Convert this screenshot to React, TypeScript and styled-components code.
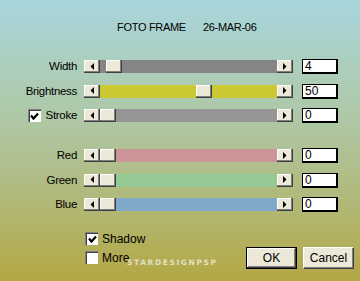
import React, { FC } from "react";
import styled, { createGlobalStyle } from "styled-components";

const GlobalStyle = createGlobalStyle`
  html, body {
    margin: 0;
    padding: 0;
  }
  body {
    font-family: "Liberation Sans", Arial, sans-serif;
    font-size: 11px;
    color: #000;
  }
`;

const Dialog = styled.div`
  position: relative;
  width: 360px;
  height: 281px;
  overflow: hidden;
  background: linear-gradient(
    to bottom,
    #a8d5de 0%,
    #acceba 25%,
    #afc59e 48%,
    #b1b878 72%,
    #b3a744 100%
  );
  display: flex;
  flex-direction: column;
`;

const Title = styled.div`
  display: flex;
  gap: 17px;
  padding-left: 117px;
  margin-top: 21px;
  line-height: 13px;
  font-size: 11px;
  letter-spacing: -0.3px;
`;

const Group = styled.div<{ $top: number }>`
  display: flex;
  flex-direction: column;
  gap: 9.5px;
  margin-top: ${({ $top }) => $top}px;
`;

const Row = styled.div`
  display: flex;
  align-items: center;
  height: 15px;
`;

const Label = styled.div`
  width: 77px;
  display: flex;
  justify-content: flex-end;
  align-items: center;
  gap: 5px;
  white-space: nowrap;
  line-height: 13px;
  font-size: 11.5px;
  letter-spacing: -0.3px;
`;

const ScrollBar = styled.div`
  display: flex;
  width: 209px;
  height: 13px;
  margin-left: 7px;
`;

const Raised = styled.div`
  box-sizing: border-box;
  background: #ece9d8;
  box-shadow: inset -1px -1px #808080, inset 1px 1px #ffffff;
  border-right: 1px solid #404040;
  border-bottom: 1px solid #404040;
`;

const ArrowButton = styled(Raised)`
  width: 16px;
  height: 13px;
  display: flex;
  align-items: center;
  justify-content: center;
`;

const Track = styled.div<{ $color: string }>`
  position: relative;
  flex: 1;
  background: ${({ $color }) => $color};
`;

const Thumb = styled(Raised)`
  position: absolute;
  top: 0;
  width: 16px;
  height: 13px;
`;

const ValueBox = styled.div`
  box-sizing: border-box;
  width: 36px;
  height: 15px;
  margin-left: 9px;
  background: #fff;
  border: 1px solid #000;
  border-right-width: 2px;
  border-bottom-width: 2px;
  padding-left: 2px;
  line-height: 12px;
  font-size: 12px;
`;

const CheckBox = styled.div`
  box-sizing: border-box;
  width: 13px;
  height: 13px;
  background: #fff;
  border-top: 1px solid #808080;
  border-left: 1px solid #808080;
  box-shadow: inset 1px 1px #404040;
  display: flex;
  align-items: center;
  justify-content: center;
  flex-shrink: 0;
`;

const Bottom = styled.div`
  display: flex;
  margin-top: 20px;
`;

const Options = styled.div`
  display: flex;
  flex-direction: column;
  gap: 6px;
  padding-left: 85px;
  width: 246px;
  box-sizing: border-box;
`;

const Option = styled.div`
  display: flex;
  align-items: center;
  gap: 4px;
  height: 13px;
  font-size: 12px;
`;

const Buttons = styled.div`
  display: flex;
  gap: 6px;
  margin-top: 15px;
`;

const Button = styled.div<{ $default?: boolean }>`
  box-sizing: border-box;
  width: 51px;
  height: 22px;
  display: flex;
  align-items: center;
  justify-content: center;
  background: #ece9d8;
  font-size: 12px;
  border: 1px solid ${({ $default }) => ($default ? "#000" : "#fff")};
  ${({ $default }) =>
    $default
      ? "box-shadow: inset -1px -1px #404040, inset 1px 1px #fff, inset -2px -2px #808080;"
      : "border-right-color: #404040; border-bottom-color: #404040; box-shadow: inset -1px -1px #808080;"}
`;

const Watermark = styled.div`
  position: absolute;
  left: 127px;
  top: 258px;
  font-family: "DejaVu Sans", sans-serif;
  font-weight: bold;
  font-size: 7.5px;
  letter-spacing: 1.6px;
  color: rgba(240, 240, 225, 0.8);
`;

const Arrow: FC<{ dir: "left" | "right" }> = ({ dir }) => (
  <svg width="4" height="7" viewBox="0 0 4 7">
    {dir === "left" ? (
      <polygon points="4,0 4,7 0.5,3.5" fill="#000" />
    ) : (
      <polygon points="0,0 0,7 3.5,3.5" fill="#000" />
    )}
  </svg>
);

const Check: FC<{ checked: boolean }> = ({ checked }) => (
  <CheckBox>
    {checked && (
      <svg width="9" height="9" viewBox="0 0 9 9">
        <path d="M1 3.5 L3.5 6.5 L8 1.5" stroke="#000" strokeWidth="2.2" fill="none" />
      </svg>
    )}
  </CheckBox>
);

type Slider = {
  label: string;
  value: string;
  color: string;
  pos: number;
  check?: boolean;
};

const groupA: Slider[] = [
  { label: "Width", value: "4", color: "#858585", pos: 0.037 },
  { label: "Brightness", value: "50", color: "#cbc932", pos: 0.593 },
  { label: "Stroke", value: "0", color: "#959595", pos: 0, check: true },
];

const groupB: Slider[] = [
  { label: "Red", value: "0", color: "#cb9598", pos: 0 },
  { label: "Green", value: "0", color: "#95c995", pos: 0 },
  { label: "Blue", value: "0", color: "#7fa8c9", pos: 0 },
];

const SliderRow: FC<{ s: Slider }> = ({ s }) => (
  <Row>
    <Label>
      {s.check !== undefined && <Check checked={s.check} />}
      <span>{s.label}</span>
    </Label>
    <ScrollBar>
      <ArrowButton>
        <Arrow dir="left" />
      </ArrowButton>
      <Track $color={s.color}>
        <Thumb style={{ left: `${Math.round(s.pos * 162)}px` }} />
      </Track>
      <ArrowButton>
        <Arrow dir="right" />
      </ArrowButton>
    </ScrollBar>
    <ValueBox>{s.value}</ValueBox>
  </Row>
);

const App: FC = () => (
  <>
    <GlobalStyle />
    <Dialog>
      <Title>
        <span>FOTO FRAME</span>
        <span>26-MAR-06</span>
      </Title>
      <Group $top={25}>
        {groupA.map((s) => (
          <SliderRow key={s.label} s={s} />
        ))}
      </Group>
      <Group $top={25}>
        {groupB.map((s) => (
          <SliderRow key={s.label} s={s} />
        ))}
      </Group>
      <Bottom>
        <Options>
          <Option>
            <Check checked />
            <span>Shadow</span>
          </Option>
          <Option>
            <Check checked={false} />
            <span>More</span>
          </Option>
        </Options>
        <Buttons>
          <Button $default>OK</Button>
          <Button>Cancel</Button>
        </Buttons>
      </Bottom>
      <Watermark>STARDESIGNPSP</Watermark>
    </Dialog>
  </>
);

export default App;
